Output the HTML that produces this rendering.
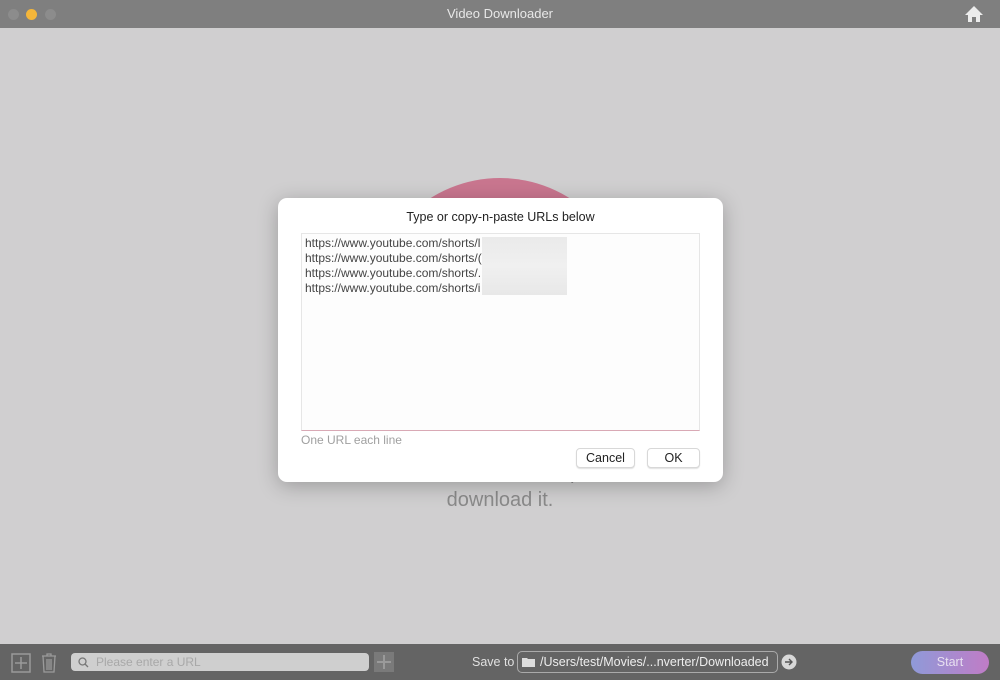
<!DOCTYPE html>
<html><head><style>
body{margin:0;width:1000px;height:680px;overflow:hidden;font-family:"Liberation Sans",sans-serif;background:#d0cfd0;position:relative}
.tb{position:absolute;left:0;top:0;width:1000px;height:28px;background:#7f7f7f;color:#e8e8e8;font-size:13px;text-align:center;line-height:28px}
.dot{position:absolute;top:9px;width:11px;height:11px;border-radius:50%;background:#8c8c8c}
.circle{position:absolute;left:370px;top:178px;width:260px;height:260px;border-radius:50%;background:#c9768f}
.msg{position:absolute;left:270px;top:460px;width:460px;text-align:center;font-size:20px;color:#8a8a8a;line-height:27px;white-space:nowrap}
.dlg{position:absolute;left:278px;top:198px;width:445px;height:284px;background:#fff;border-radius:9px;box-shadow:0 4px 20px rgba(0,0,0,.25)}
.ttl{position:absolute;top:12px;width:100%;text-align:center;font-size:12.5px;color:#222}
.ta{position:absolute;left:23px;top:35px;width:397px;height:196px;background:#fdfdfd;border:1px solid #e6e6e6;border-bottom-color:#d9a9b5}
.ta div{font-size:12px;color:#444;line-height:15px;padding-left:3px}
.blur{position:absolute;left:180px;top:3px;width:82px;height:58px;background:linear-gradient(#eaeaea,#f0f0f0 50%,#e8e8e8)}
.hint{position:absolute;left:23px;top:235px;font-size:12px;color:#a0a0a0}
.btn{position:absolute;top:250px;height:18px;border:1px solid #d8d8d8;border-radius:4px;box-shadow:0 1px 1px rgba(0,0,0,.12);font-size:12.5px;text-align:center;line-height:18px;color:#222;background:#fff}
.bb{position:absolute;left:0;top:644px;width:1000px;height:36px;background:#646464}
</style></head><body>
<div class="tb">Video Downloader
<div class="dot" style="left:8px"></div><div class="dot" style="left:26px;background:#f4b63a"></div><div class="dot" style="left:45px"></div>
<svg style="position:absolute;right:16px;top:5px" width="20" height="18" viewBox="0 0 20 18"><path d="M10 1L1 10h3v7h4v-5h4v5h4v-7h3z" fill="#ececec"/></svg>
</div>
<div class="circle"></div>
<div class="msg">Paste the video URLs into the input box below to<br>download it.</div>
<div class="dlg">
<div class="ttl">Type or copy-n-paste URLs below</div>
<div class="ta"><div style="padding-top:2px">https://www.youtube.com/shorts/l</div><div>https://www.youtube.com/shorts/(</div><div>https://www.youtube.com/shorts/.</div><div>https://www.youtube.com/shorts/i</div><div class="blur"></div></div>
<div class="hint">One URL each line</div>
<div class="btn" style="left:298px;width:57px">Cancel</div>
<div class="btn" style="left:369px;width:51px">OK</div>
</div>
<div class="bb">
<svg style="position:absolute;left:11px;top:9px" width="20" height="20"><rect x="1" y="1" width="18" height="18" fill="none" stroke="#9a9a9a" stroke-width="1.5"/><path d="M10 4v12M4 10h12" stroke="#9a9a9a" stroke-width="1.5"/></svg>
<svg style="position:absolute;left:40px;top:8px" width="18" height="21"><path d="M2 4h14M7 4V2h4v2M3 4l1 16h10l1-16M7 7v11M9 7v11M11 7v11" fill="none" stroke="#9a9a9a" stroke-width="1.3"/></svg>
<div style="position:absolute;left:71px;top:9px;width:298px;height:18px;background:#cfcfcf;border-radius:4px;font-size:12px;color:#a8a8a8;line-height:18px;padding-left:25px;box-sizing:border-box">Please enter a URL</div>
<svg style="position:absolute;left:78px;top:13px" width="11" height="11"><circle cx="4.5" cy="4.5" r="3.5" fill="none" stroke="#777" stroke-width="1.3"/><path d="M7 7l3 3" stroke="#777" stroke-width="1.3"/></svg>
<div style="position:absolute;left:374px;top:8px;width:20px;height:20px;background:#7a7a7a"><svg width="20" height="20"><path d="M10 3v14M3 10h14" stroke="#9a9a9a" stroke-width="2"/></svg></div>
<div style="position:absolute;left:472px;top:11px;font-size:12.5px;color:#e0e0e0">Save to</div>
<div style="position:absolute;left:517px;top:7px;height:20px;border:1px solid #aaa;border-radius:5px;font-size:12.5px;color:#eee;line-height:20px;padding-left:22px;width:237px">/Users/test/Movies/...nverter/Downloaded</div>
<svg style="position:absolute;left:522px;top:12px" width="13" height="11"><path d="M0 2h5l1 1h7v8H0z" fill="#ddd"/></svg>
<svg style="position:absolute;left:781px;top:10px" width="16" height="16"><circle cx="8" cy="8" r="7.5" fill="#d8d8d8"/><path d="M4 8h7M8 5l3 3-3 3" stroke="#555" stroke-width="1.4" fill="none"/></svg>
<div style="position:absolute;left:911px;top:7px;width:78px;height:23px;border-radius:12px;background:linear-gradient(90deg,#8f9ad8,#c07cc6);color:#e8e0f0;font-size:12.5px;text-align:center;line-height:23px">Start</div>
</div>
</body></html>
